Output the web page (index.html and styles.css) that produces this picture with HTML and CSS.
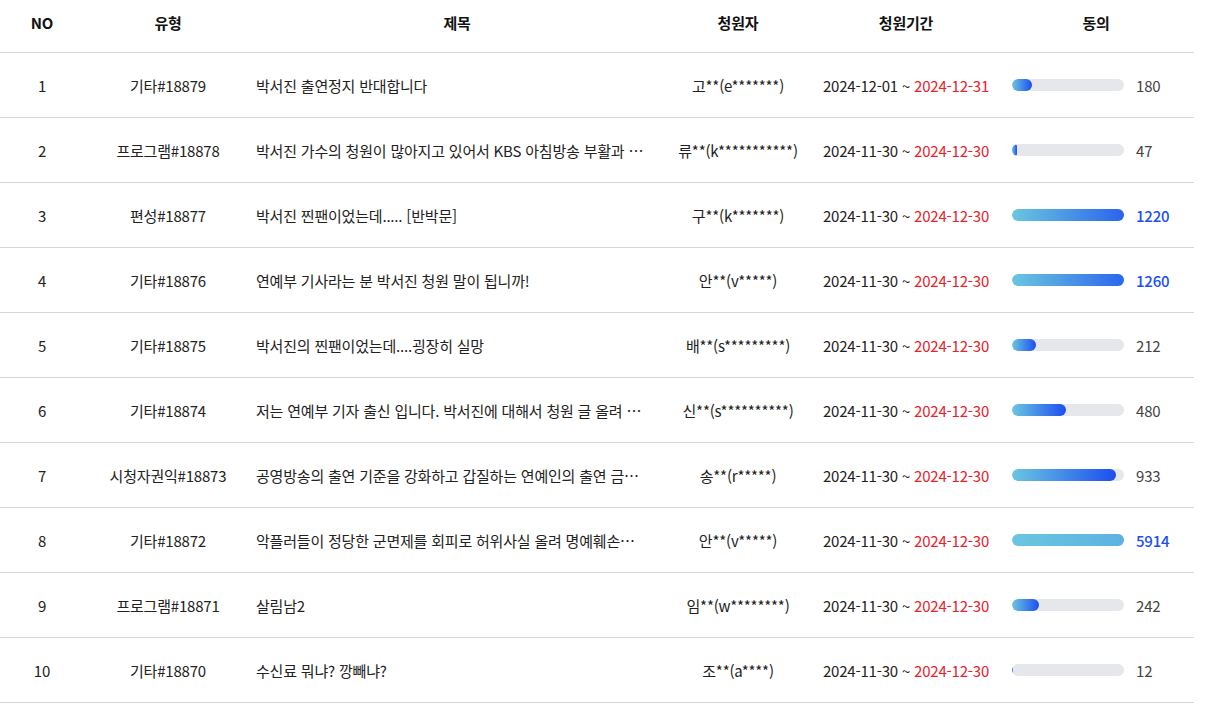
FILE: index.html
```html
<!DOCTYPE html>
<html lang="ko">
<head>
<meta charset="utf-8">
<link rel="stylesheet" href="styles.css">
</head>
<body>
<table class="board">
  <colgroup>
    <col class="c-no"><col class="c-type"><col class="c-title"><col class="c-user"><col class="c-date"><col class="c-agree">
  </colgroup>
  <thead>
    <tr><th>NO</th><th>유형</th><th>제목</th><th>청원자</th><th>청원기간</th><th>동의</th></tr>
  </thead>
  <tbody>
    <tr><td>1</td><td>기타#18879</td><td class="title">박서진 출연정지 반대합니다</td><td>고**(e*******)</td><td>2024-12-01 ~ <span class="end">2024-12-31</span></td><td class="agree"><div class="cell"><span class="track"><span class="fill" style="width:18%"></span></span><span class="num">180</span></div></td></tr>
    <tr><td>2</td><td>프로그램#18878</td><td class="title">박서진 가수의 청원이 많아지고 있어서 KBS 아침방송 부활과 …</td><td>류**(k***********)</td><td>2024-11-30 ~ <span class="end">2024-12-30</span></td><td class="agree"><div class="cell"><span class="track"><span class="fill" style="width:4.7%"></span></span><span class="num">47</span></div></td></tr>
    <tr><td>3</td><td>편성#18877</td><td class="title">박서진 찐팬이었는데..... [반박문]</td><td>구**(k*******)</td><td>2024-11-30 ~ <span class="end">2024-12-30</span></td><td class="agree"><div class="cell"><span class="track"><span class="fill" style="width:122%"></span></span><span class="num hot">1220</span></div></td></tr>
    <tr><td>4</td><td>기타#18876</td><td class="title">연예부 기사라는 분 박서진 청원 말이 됩니까!</td><td>안**(v*****)</td><td>2024-11-30 ~ <span class="end">2024-12-30</span></td><td class="agree"><div class="cell"><span class="track"><span class="fill" style="width:126%"></span></span><span class="num hot">1260</span></div></td></tr>
    <tr><td>5</td><td>기타#18875</td><td class="title">박서진의 찐팬이었는데....굉장히 실망</td><td>배**(s*********)</td><td>2024-11-30 ~ <span class="end">2024-12-30</span></td><td class="agree"><div class="cell"><span class="track"><span class="fill" style="width:21.2%"></span></span><span class="num">212</span></div></td></tr>
    <tr><td>6</td><td>기타#18874</td><td class="title">저는 연예부 기자 출신 입니다. 박서진에 대해서 청원 글 올려 …</td><td>신**(s**********)</td><td>2024-11-30 ~ <span class="end">2024-12-30</span></td><td class="agree"><div class="cell"><span class="track"><span class="fill" style="width:48%"></span></span><span class="num">480</span></div></td></tr>
    <tr><td>7</td><td>시청자권익#18873</td><td class="title">공영방송의 출연 기준을 강화하고 갑질하는 연예인의 출연 금…</td><td>송**(r*****)</td><td>2024-11-30 ~ <span class="end">2024-12-30</span></td><td class="agree"><div class="cell"><span class="track"><span class="fill" style="width:93.3%"></span></span><span class="num">933</span></div></td></tr>
    <tr><td>8</td><td>기타#18872</td><td class="title">악플러들이 정당한 군면제를 회피로 허위사실 올려 명예훼손…</td><td>안**(v*****)</td><td>2024-11-30 ~ <span class="end">2024-12-30</span></td><td class="agree"><div class="cell"><span class="track"><span class="fill" style="width:591.4%"></span></span><span class="num hot">5914</span></div></td></tr>
    <tr><td>9</td><td>프로그램#18871</td><td class="title">살림남2</td><td>임**(w********)</td><td>2024-11-30 ~ <span class="end">2024-12-30</span></td><td class="agree"><div class="cell"><span class="track"><span class="fill" style="width:24.2%"></span></span><span class="num">242</span></div></td></tr>
    <tr><td>10</td><td>기타#18870</td><td class="title">수신료 뭐냐? 깡빼냐?</td><td>조**(a****)</td><td>2024-11-30 ~ <span class="end">2024-12-30</span></td><td class="agree"><div class="cell"><span class="track"><span class="fill" style="width:1.2%"></span></span><span class="num">12</span></div></td></tr>
  </tbody>
</table>
</body>
</html>
```
FILE: styles.css
```css
html, body {
  margin: 0;
  padding: 0;
  background: #fff;
}
body {
  font-family: "Noto Sans CJK KR", "Noto Sans", sans-serif;
  font-size: 15px;
  color: #222;
  letter-spacing: -0.2px;
}
.board {
  width: 1194px;
  border-collapse: collapse;
  table-layout: fixed;
}
.c-no { width: 84px; }
.c-type { width: 168px; }
.c-title { width: 410px; }
.c-user { width: 152px; }
.c-date { width: 184px; }
.c-agree { width: 196px; }
.board th {
  height: 40px;
  padding: 12px 0 0;
  vertical-align: top;
  font-weight: 700;
  color: #111;
  text-align: center;
  border-bottom: 1px solid #d6d6d6;
}
.board td {
  height: 64px;
  padding: 0;
  text-align: center;
  border-bottom: 1px solid #d6d6d6;
  white-space: nowrap;
}
.board td.title {
  text-align: left;
  padding: 0 4px 0 4px;
  overflow: hidden;
  text-overflow: ellipsis;
}
.end { color: #e8212b; }
.board td.agree { text-align: left; padding-left: 14px; }
.cell {
  display: flex;
  align-items: center;
  gap: 12px;
}
.track {
  display: block;
  width: 112px;
  height: 12px;
  border-radius: 6px;
  background: #e5e7eb;
  overflow: hidden;
}
.fill {
  display: block;
  height: 100%;
  border-radius: 6px;
  background: linear-gradient(90deg, #6ac6df, #1d4ef0);
}
.num { color: #444; }
.num.hot { color: #1d4ef5; font-weight: 500; }
```
